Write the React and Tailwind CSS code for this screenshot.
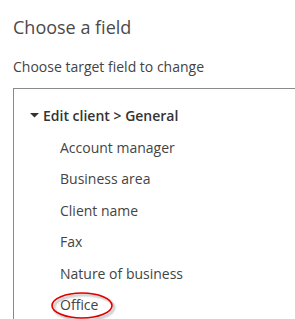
export default function App() {
  const items = ["Account manager", "Business area", "Client name", "Fax", "Nature of business", "Office"];
  return (
    <div className="w-[295px] h-[319px] overflow-hidden bg-white pl-[13px] pt-[15px]" style={{ fontFamily: '"Open Sans", sans-serif' }}>
      <div className="text-[18px] leading-[24px] text-[#4a4a4a] whitespace-nowrap">Choose a field</div>
      <div className="mt-[18px] text-[14px] leading-[19px] text-[#444] whitespace-nowrap">Choose target field to change</div>
      <div className="mt-[12px] w-[300px] h-[240px] border-l border-t border-[#8a8a8a] pl-[16px] pt-[11px]">
        <div className="flex items-center h-[31.5px] text-[14px] font-semibold text-[#333] whitespace-nowrap">
          <svg width="9" height="5" viewBox="0 0 9 5" className="mr-[4px]">
            <polygon points="0,0 9,0 4.5,4.5" fill="#333" />
          </svg>
          Edit client &gt; General
        </div>
        <div className="pl-[30px]">
          {items.map((t) => (
            <div key={t} className="relative h-[31.5px] leading-[31.5px] text-[14px] text-[#444] whitespace-nowrap">
              {t}
              {t === "Office" && (
                <svg className="absolute left-[-9px] top-[3px] overflow-visible" width="64" height="30" viewBox="0 0 64 30">
                  <defs>
                    <filter id="sh" x="-20%" y="-30%" width="140%" height="170%">
                      <feDropShadow dx="2" dy="2" stdDeviation="1.2" floodColor="#000" floodOpacity="0.35" />
                    </filter>
                  </defs>
                  <ellipse cx="31" cy="13.5" rx="30" ry="12.5" fill="none" stroke="#e00000" strokeWidth="1.6" filter="url(#sh)" />
                </svg>
              )}
            </div>
          ))}
        </div>
      </div>
    </div>
  );
}
